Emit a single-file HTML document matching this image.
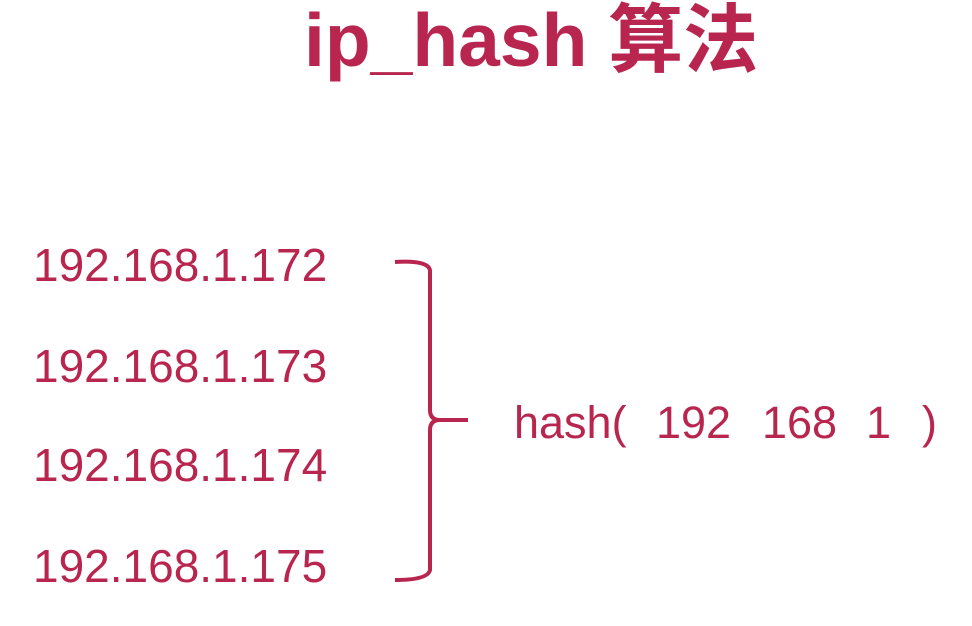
<!DOCTYPE html>
<html><head><meta charset="utf-8"><style>
body{margin:0;width:972px;height:626px;background:#fff;overflow:hidden;position:relative;font-family:"Liberation Sans","Noto Sans CJK SC",sans-serif;color:#b8264f}
.t{position:absolute;left:304px;top:-2px;font-size:75px;font-weight:bold;line-height:84px;white-space:nowrap}
.ip{position:absolute;left:33px;font-size:46px;line-height:50px;white-space:nowrap}
.h{position:absolute;top:398px;font-size:45px;line-height:50px}
</style></head><body>
<div class="t">ip_hash 算法</div>
<div class="ip" style="top:240px">192.168.1.172</div>
<div class="ip" style="top:341px">192.168.1.173</div>
<div class="ip" style="top:440px">192.168.1.174</div>
<div class="ip" style="top:541px">192.168.1.175</div>
<svg style="position:absolute;left:0;top:0" width="972" height="626">
<path d="M395 262 Q428 260 430 270 L430 410 Q430 420 440 420 L468 420 M440 420 Q430 420 430 430 L430 570 Q428 580 395 580" fill="none" stroke="#b8264f" stroke-width="4"/>
</svg>
<div class="h" style="left:514px">hash(</div>
<div class="h" style="left:656px">192</div>
<div class="h" style="left:762px">168</div>
<div class="h" style="left:866px">1</div>
<div class="h" style="left:922px">)</div>
</body></html>
